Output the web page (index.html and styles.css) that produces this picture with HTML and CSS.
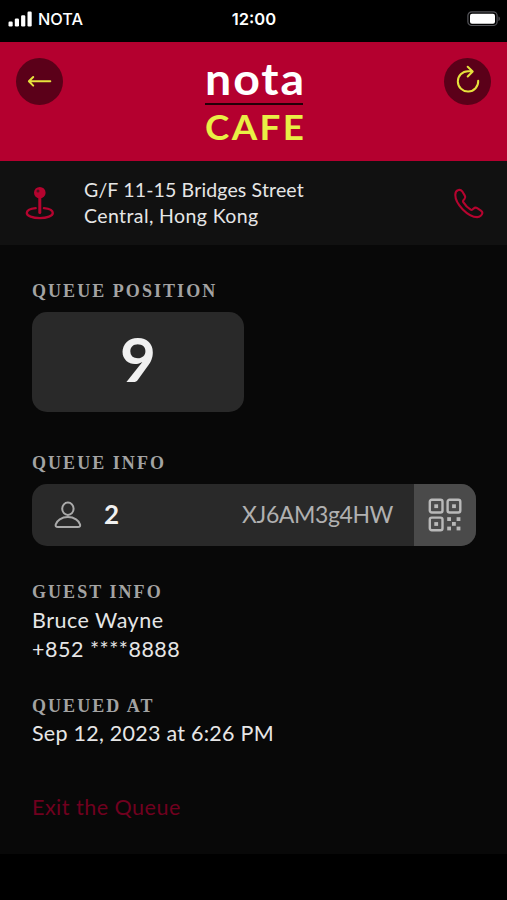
FILE: index.html
```html
<!DOCTYPE html>
<html lang="en">
<head>
    <meta charset="UTF-8">
    <meta name="viewport" content="width=device-width, initial-scale=1.0">
    <title>Nota Cafe - Queue</title>
    <link rel="stylesheet" href="styles.css">
</head>
<body>
    <div class="status-bar">
        <div class="carrier">
            <svg width="24" height="16" viewBox="0 0 24 16" fill="#fff">
                <rect x="0.5" y="10.5" width="4.2" height="5" rx="1.2"/>
                <rect x="6.8" y="7.5" width="4.2" height="8" rx="1.2"/>
                <rect x="13.1" y="4.2" width="4.2" height="11.3" rx="1.2"/>
                <rect x="19.5" y="0.5" width="4.2" height="15" rx="1.2"/>
            </svg>
            <span>NOTA</span>
        </div>
        <span class="time">12:00</span>
        <svg class="battery" width="34" height="16" viewBox="0 0 34 16">
            <rect x="0.9" y="0.9" width="29.2" height="13.6" rx="3.8" fill="none" stroke="#55555a" stroke-width="1.2"/>
            <rect x="3" y="2.8" width="25" height="10" rx="2" fill="#fff"/>
            <path d="M31.5 5.5c1.8.5 1.8 4 0 4.5z" fill="#55555a"/>
        </svg>
    </div>

    <header>
        <button class="round-btn" aria-label="Back">
            <svg width="47" height="47" viewBox="0 0 47 47">
                <path d="M34.3 23.3H13M17.2 19L12.9 23.3l4.3 4.3"/>
            </svg>
        </button>
        <div class="logo">
            <h1><span>nota</span></h1>
            <h2><span>CAFE</span></h2>
        </div>
        <button class="round-btn" aria-label="Refresh">
            <svg width="47" height="47" viewBox="0 0 47 47">
                <path d="M34.2 22.8a10.2 10.2 0 1 1-10.2-9.6h4.5M23.7 8.8l5 4.7-5 5"/>
            </svg>
        </button>
    </header>

    <section class="address">
        <svg width="30" height="36" viewBox="0 0 30 36">
            <path d="M10.7 22.2C5.4 22.8 1.8 24.6 1.8 27c0 3 5.8 5.1 13 5.1s13-2.1 13-5.1c0-2.4-3.6-4.2-8.9-4.8" fill="none" stroke="#b5042f" stroke-width="2.3" stroke-linecap="round"/>
            <path d="M14.8 10v16.5" stroke="#b5042f" stroke-width="3" stroke-linecap="round"/>
            <circle cx="14.8" cy="6.7" r="5.8" fill="#b5042f"/>
            <circle cx="13" cy="4.9" r="1.5" fill="#50101f"/>
        </svg>
        <p><span class="street">G/F 11-15 Bridges Street</span><br><span class="city">Central, Hong Kong</span></p>
        <svg class="phone" width="32" height="32" viewBox="0 0 32 32">
            <path d="M5.4 2.1C3.8 2.6 2.3 4.4 2.3 7.1c0 3.9 2.7 9.5 7.5 14.3 4.8 4.8 10.4 7.7 14.4 7.7 2.8 0 5-2.2 5.2-4.1.1-1-.4-1.6-1.2-2.2l-4-2.6c-1.4-.9-2.3-.9-3.5.2l-1.3 1.2c-.6.6-1 .5-1.7.1-2.4-1.5-5.8-4.9-7.6-7.8-.3-.6-.2-1 .2-1.5l1.3-1.5c.9-1 1-2 .2-3.3L9.2 3.3C8.1 1.9 6.8 1.6 5.4 2.1z"/>
        </svg>
    </section>

    <main>
        <section class="position">
            <h3>QUEUE POSITION</h3>
            <div class="number"><span>9</span></div>
        </section>

        <section class="queue">
            <h3>QUEUE INFO</h3>
            <div class="queue-card">
                <svg class="person" width="28" height="28" viewBox="0 0 28 28">
                    <ellipse cx="13.9" cy="7.8" rx="5.7" ry="6.2"/>
                    <path d="M3.8 26c-1.8 0-2.4-1-2.1-2.4 1-4 5.8-7.5 12.2-7.5s11.2 3.5 12.2 7.5c.3 1.4-.3 2.4-2.1 2.4z"/>
                </svg>
                <span class="guests">2</span>
                <span class="code">XJ6AM3g4HW</span>
                <button class="qr" aria-label="Show QR code">
                    <svg width="34" height="34" viewBox="0 0 34 34">
                        <g fill="none" stroke="#b9b9b9" stroke-width="2.4">
                            <rect x="1.8" y="1.8" width="12.7" height="12.7" rx="2"/>
                            <rect x="19.6" y="1.8" width="12.7" height="12.7" rx="2"/>
                            <rect x="1.8" y="19.6" width="12.7" height="12.7" rx="2"/>
                        </g>
                        <g fill="#b9b9b9">
                            <rect x="6.3" y="6.3" width="3.8" height="3.8"/>
                            <rect x="24.1" y="6.3" width="3.8" height="3.8"/>
                            <rect x="6.3" y="24.1" width="3.8" height="3.8"/>
                            <rect x="19.2" y="19.2" width="3.8" height="3.8"/>
                            <rect x="28.6" y="19.2" width="3.8" height="3.8"/>
                            <rect x="24" y="24" width="3.8" height="3.8"/>
                            <rect x="19.2" y="28.6" width="3.8" height="3.8"/>
                            <rect x="28.6" y="28.6" width="3.8" height="3.8"/>
                        </g>
                    </svg>
                </button>
            </div>
        </section>

        <section class="guest">
            <h3>GUEST INFO</h3>
            <p class="name">Bruce Wayne</p>
            <p class="tel">+852 ****8888</p>
        </section>

        <section class="queued">
            <h3>QUEUED AT</h3>
            <p class="date">Sep 12, 2023 at 6:26 PM</p>
        </section>

        <a href="#" class="exit">Exit the Queue</a>
    </main>
</body>
</html>
```
FILE: styles.css
```css
* {
    box-sizing: border-box;
}
body {
    font-family: Lato, "Liberation Sans", sans-serif;
    margin: 0;
    background-color: #000;
    color: #e6e6e6;
    height: 900px;
    overflow: hidden;
}
h1, h2, h3, p {
    margin: 0;
}
svg {
    display: block;
    flex-shrink: 0;
}
button {
    border: none;
    padding: 0;
    cursor: pointer;
}
.status-bar {
    height: 42px;
    padding: 0 8px 4px;
    display: grid;
    grid-template-columns: 1fr auto 1fr;
    align-items: center;
    font-family: Inter, sans-serif;
    font-size: 16.5px;
    color: #fff;
}
.carrier {
    display: flex;
    align-items: center;
    gap: 6px;
}
.carrier svg {
    margin-top: -1px;
}
.carrier span {
    font-size: 16.3px;
    font-weight: 500;
}
.time {
    font-weight: 600;
    margin-left: 1px;
}
.battery {
    justify-self: end;
    margin-right: -2px;
}
header {
    height: 119px;
    padding: 16px 16px 0;
    background-color: #b4002f;
    display: flex;
    justify-content: space-between;
}
.round-btn {
    width: 47px;
    height: 47px;
    border-radius: 50%;
    background-color: #5b0019;
}
.round-btn path {
    fill: none;
    stroke: #e6e23d;
    stroke-width: 2;
    stroke-linecap: round;
    stroke-linejoin: round;
}
.logo {
    width: 98px;
    white-space: nowrap;
}
.logo span {
    display: inline-block;
    transform: scaleX(1.08);
    transform-origin: left;
}
.logo h1 {
    height: 47px;
    line-height: 41px;
    font-size: 43px;
    font-weight: 700;
    color: #fff;
    letter-spacing: 1.8px;
    border-bottom: 2px solid #220008;
}
.logo h2 {
    line-height: 44px;
    font-size: 34px;
    font-weight: 700;
    color: #e9ef45;
    letter-spacing: 2.2px;
}
.address {
    height: 84px;
    padding: 0 22px 0 25px;
    background-color: #111;
    display: flex;
    align-items: center;
}
.address svg {
    margin-top: 2px;
}
.address p {
    flex: 1;
    margin-left: 29px;
    margin-top: -1px;
    font-size: 19.5px;
    line-height: 26px;
}
.street {
    letter-spacing: 0.15px;
}
.city {
    letter-spacing: 0.4px;
}
.phone path {
    fill: none;
    stroke: #b5042f;
    stroke-width: 2.1;
}
main {
    height: 609px;
    padding: 36px 31px 0 32px;
    background-color: #080808;
}
h3 {
    font-family: "Liberation Serif", serif;
    font-size: 18px;
    line-height: 20px;
    font-weight: 700;
    letter-spacing: 2.05px;
    color: #a3a3a3;
}
.number {
    width: 212px;
    height: 100px;
    margin-top: 11px;
    padding-bottom: 9px;
    border-radius: 15px;
    background-color: #292929;
    color: #f0f0f0;
    font-size: 62px;
    font-weight: 700;
    display: flex;
    align-items: center;
    justify-content: center;
}
.queue {
    margin-top: 41px;
}
.queue-card {
    height: 62px;
    margin-top: 11px;
    padding-left: 22px;
    border-radius: 15px;
    overflow: hidden;
    background-color: #292929;
    display: flex;
    align-items: center;
}
.person {
    fill: none;
    stroke: #aaa;
    stroke-width: 2;
}
.guests {
    margin-left: 22px;
    margin-top: -3px;
    font-size: 26px;
    font-weight: 700;
    color: #f0f0f0;
}
.code {
    margin-left: auto;
    margin-top: -3px;
    margin-right: 21px;
    font-size: 23px;
    letter-spacing: -0.4px;
    color: #b0b0b0;
}
.qr {
    width: 62px;
    height: 62px;
    background-color: #4a4a4a;
    display: flex;
    align-items: center;
    justify-content: center;
}
.guest {
    margin-top: 36px;
}
.guest p, .queued p, .exit {
    font-size: 21.5px;
    line-height: 29px;
    letter-spacing: 0.5px;
}
.guest h3 {
    margin-bottom: 4px;
}
.queued {
    margin-top: 32px;
}
.queued h3 {
    margin-bottom: 3px;
}
.queued .date {
    letter-spacing: 0.25px;
}
.exit {
    display: block;
    margin-top: 45px;
    color: #70001f;
    text-decoration: none;
}
```
